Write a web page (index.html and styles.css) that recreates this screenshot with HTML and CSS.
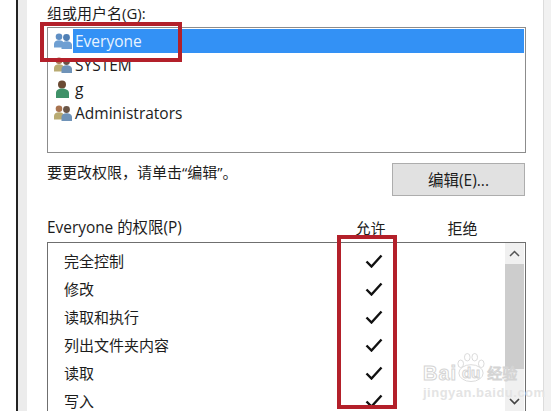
FILE: index.html
```html
<!DOCTYPE html>
<html lang="zh-CN">
<head>
  <meta charset="UTF-8" />
  <meta name="viewport" content="width=device-width, initial-scale=1.0" />
  <title>Everyone 的权限</title>
  <link rel="stylesheet" href="styles.css">
</head>
<body>
  <svg width="0" height="0" class="defs">
    <defs>
      <symbol id="users" viewBox="0 0 18 16">
        <circle cx="5" cy="3.800" r="3.300" fill="var(--back-head)" />
        <path d="M0 14.500v-3.500c0-2.500 2-3.800 5-3.800s5 1.300 5 3.800v3.500z" fill="var(--back)" />
        <circle cx="12.500" cy="4.500" r="3.400" fill="var(--front-head)" />
        <path d="M7.500 16v-4c0-2.500 2-3.800 5-3.800s5.500 1.300 5.500 3.800v4z" fill="var(--front)" />
      </symbol>
      <symbol id="check" viewBox="0 0 18 14">
        <path d="M1.500 7.500 6.500 12.500 16.500 1.500" fill="none" stroke="#111" stroke-width="2.400" />
      </symbol>
    </defs>
  </svg>

  <div class="dialog">
    <div class="pane">
      <div class="group-label">组或用户名(G):</div>
      <ul class="users">
        <li class="user selected">
          <svg class="user-icon blue"><use href="#users" /></svg>
          <span class="user-name">Everyone</span>
        </li>
        <li class="user">
          <svg class="user-icon tan"><use href="#users" /></svg>
          <span class="user-name">SYSTEM</span>
        </li>
        <li class="user">
          <svg class="user-icon single" viewBox="0 0 18 18">
            <circle cx="8" cy="4.500" r="4" fill="#6b4a33" />
            <path d="M2 18v-5c0-3 2.500-4.500 6-4.500s7 1.500 7 4.500v5z" fill="#3f9168" />
          </svg>
          <span class="user-name">g</span>
        </li>
        <li class="user">
          <svg class="user-icon tan"><use href="#users" /></svg>
          <span class="user-name">Administrators</span>
        </li>
      </ul>

      <div class="edit-row">
        <span>要更改权限，请单击“编辑”。</span>
        <button class="edit-btn">编辑(E)...</button>
      </div>

      <div class="perm-head">
        <span class="perm-title">Everyone 的权限(P)</span>
        <span class="perm-col">允许</span>
        <span class="perm-col">拒绝</span>
      </div>

      <div class="perms">
        <div class="perm-rows">
          <div class="perm"><span class="perm-name">完全控制</span><svg class="tick"><use href="#check" /></svg></div>
          <div class="perm"><span class="perm-name">修改</span><svg class="tick"><use href="#check" /></svg></div>
          <div class="perm"><span class="perm-name">读取和执行</span><svg class="tick"><use href="#check" /></svg></div>
          <div class="perm"><span class="perm-name">列出文件夹内容</span><svg class="tick"><use href="#check" /></svg></div>
          <div class="perm"><span class="perm-name">读取</span><svg class="tick"><use href="#check" /></svg></div>
          <div class="perm"><span class="perm-name">写入</span><svg class="tick"><use href="#check" /></svg></div>
        </div>
        <div class="scrollbar">
          <div class="arrow">
            <svg width="11" height="7" viewBox="0 0 11 7"><path d="M1 6 5.500 1.500 10 6" fill="none" stroke="#555" stroke-width="1.500" /></svg>
          </div>
          <div class="thumb"></div>
          <div class="track"></div>
          <div class="arrow">
            <svg width="11" height="7" viewBox="0 0 11 7"><path d="M1 1 5.500 5.500 10 1" fill="none" stroke="#444" stroke-width="1.700" /></svg>
          </div>
        </div>
      </div>
    </div>
  </div>

  <!-- annotations drawn on top of the screenshot -->
  <div class="mark mark-user"></div>
  <div class="mark mark-allow"></div>

  <div class="watermark">
    <div class="wm-logo">
      <span class="wm-text">Bai</span>
      <span class="wm-paw-box">
        <svg class="wm-paw" viewBox="0 0 30 32">
          <ellipse cx="15" cy="22" rx="13" ry="9" />
          <ellipse cx="4" cy="12" rx="3" ry="4" />
          <ellipse cx="11" cy="5" rx="3" ry="4" />
          <ellipse cx="19" cy="5" rx="3" ry="4" />
          <ellipse cx="26" cy="12" rx="3" ry="4" />
        </svg>
        <span class="wm-text wm-du">du</span>
      </span>
      <span class="wm-text wm-cn">经验</span>
    </div>
    <div class="wm-url">jingyan.baidu.com</div>
  </div>
</body>
</html>
```

FILE: styles.css
```css
html, body {
  margin: 0;
  height: 411px;
  overflow: hidden;
}
body {
  position: relative;
  background: #fff;
  color: #1c1c1c;
  font-family: "Open Sans", "Noto Sans CJK SC", sans-serif;
  font-size: 15px;
}
.defs {
  display: block;
  height: 0;
}
.dialog {
  margin-left: 16px;
  height: 411px;
  border-left: 2px solid #222;
  box-shadow: inset 9px 0 0 #ececec, inset -7px 0 0 #f1f1f1, inset -8px 0 0 #dcdcdc;
  overflow: hidden;
}
.pane {
  margin-left: 29px;
  margin-right: 25px;
  padding-top: 3px;
}
.group-label {
  height: 24px;
  line-height: 21px;
}
.users {
  list-style: none;
  margin: 0;
  padding: 1px 1px 0 1px;
  height: 123px;
  border: 1px solid #8c8c8c;
}
.user {
  display: flex;
  align-items: center;
  height: 24px;
  padding-left: 5px;
  font-size: 15.5px;
}
.user-icon {
  width: 18px;
  height: 16px;
  margin-right: 1px;
  flex: none;
}
.user-icon.single {
  height: 18px;
}
.user-icon.blue {
  --back: #6f9fd2;
  --back-head: #5f8fc4;
  --front: #6f9fd2;
  --front-head: #4f7fb5;
}
.user-icon.tan {
  --back: #b9ab72;
  --back-head: #a8734f;
  --front: #6f93b8;
  --front-head: #6a5546;
}
.user-name {
  flex: 1;
  padding-left: 2px;
}
.user.selected .user-name {
  background: #3391f5;
  color: #e8f4ff;
  line-height: 24px;
}
.edit-row {
  display: flex;
  justify-content: space-between;
  align-items: flex-start;
  height: 55px;
  padding-top: 10px;
  line-height: 18px;
}
.edit-btn {
  width: 133px;
  height: 33px;
  margin-right: 1px;
  border: 1px solid #adadad;
  background: #e1e1e1;
  color: #1c1c1c;
  font: inherit;
  font-size: 15.5px;
  padding: 0;
}
.perm-head {
  display: flex;
  height: 24px;
  line-height: 20px;
}
.perm-title {
  flex: none;
  width: 300px;
  font-size: 15.4px;
}
.perm-col {
  flex: none;
  width: 47px;
  margin-right: 45px;
  text-align: center;
}
.perms {
  display: flex;
  height: 200px;
  border: 1px solid #6f6f6f;
}
.perm-rows {
  flex: 1;
  padding-top: 4px;
}
.perm {
  display: flex;
  align-items: center;
  height: 28px;
  padding-left: 16px;
}
.perm-name {
  width: 301px;
  padding-bottom: 2px;
}
.tick {
  width: 18px;
  height: 14px;
}
.scrollbar {
  width: 19px;
  margin-right: 1px;
  display: flex;
  flex-direction: column;
  background: #f0f0f0;
}
.arrow {
  height: 21px;
  display: flex;
  align-items: center;
  justify-content: center;
}
.thumb {
  height: 105px;
  background: #cdcdcd;
}
.track {
  height: 22px;
}
.mark {
  position: absolute;
  box-sizing: border-box;
  border: 4px solid #b3202a;
}
.mark-user {
  left: 40px;
  top: 22px;
  width: 142px;
  height: 40px;
}
.mark-allow {
  left: 337px;
  top: 235px;
  width: 60px;
  height: 174px;
}
.watermark {
  position: absolute;
  left: 423px;
  top: 352px;
  width: 100px;
}
.wm-logo {
  display: flex;
  align-items: flex-end;
  height: 31px;
}
.wm-text {
  font-family: "Liberation Sans", sans-serif;
  font-size: 20px;
  line-height: 20px;
  font-weight: bold;
  letter-spacing: 1px;
  color: rgba(255, 255, 255, 0.7);
  -webkit-text-stroke: 1px #d4d4d4;
}
.wm-paw-box {
  position: relative;
  width: 28px;
  height: 31px;
  display: flex;
  align-items: flex-end;
  justify-content: center;
}
.wm-paw {
  position: absolute;
  left: 0;
  top: 0;
  width: 28px;
  height: 31px;
  fill: rgba(255, 255, 255, 0.6);
  stroke: #d8d8d8;
}
.wm-du {
  position: relative;
  font-size: 15px;
  letter-spacing: 0;
}
.wm-cn {
  font-family: "Noto Sans CJK SC", sans-serif;
  font-size: 15px;
  letter-spacing: 0;
  margin-left: 2px;
  font-weight: normal;
}
.wm-url {
  font-family: "Liberation Sans", sans-serif;
  font-size: 13px;
  line-height: 14px;
  margin-top: 3px;
  letter-spacing: 0.5px;
  font-weight: bold;
  color: #e4e4e4;
  white-space: nowrap;
}
```
